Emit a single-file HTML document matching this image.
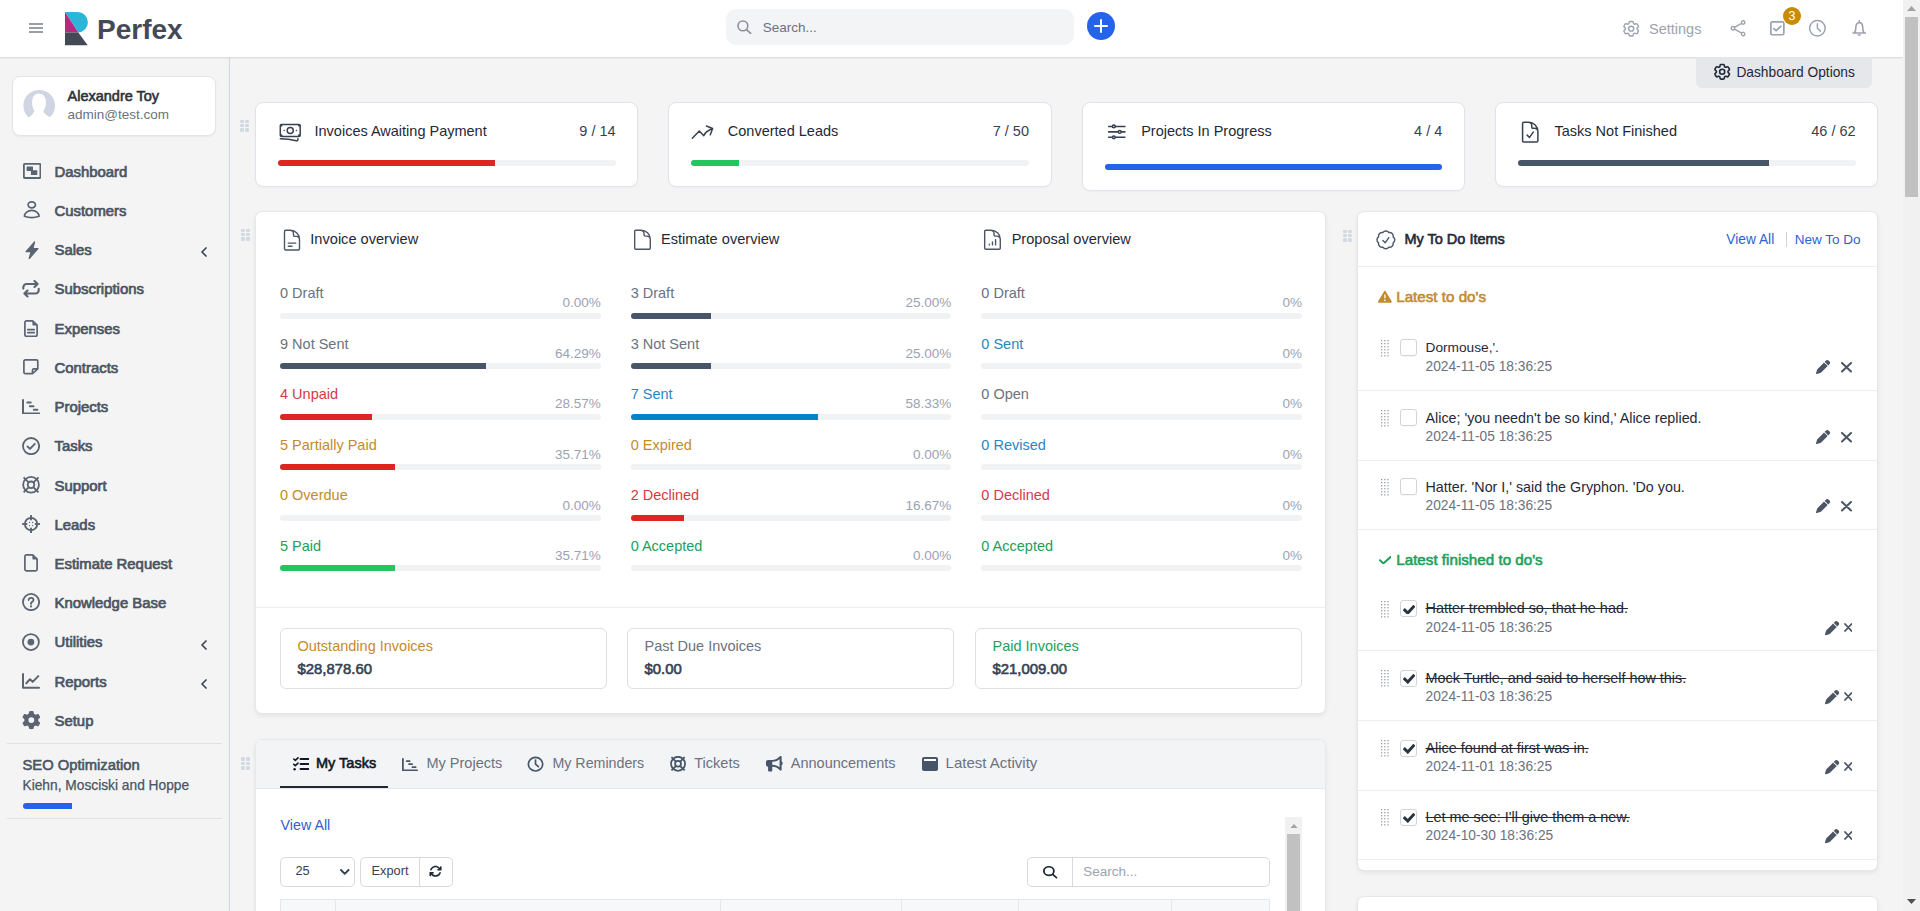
<!DOCTYPE html>
<html><head><meta charset="utf-8"><title>Perfex Dashboard</title>
<style>
*{box-sizing:border-box;margin:0;padding:0}
html,body{width:1920px;height:911px;overflow:hidden}
body{position:relative;background:#f4f4f5;font-family:"Liberation Sans",sans-serif;}
.a{position:absolute;display:block}
.t{position:absolute;white-space:nowrap}
</style></head><body>

<div class="a" style="left:0.00px;top:58.00px;width:229.00px;height:853.00px;background:#f4f4f5;"></div>
<div class="a" style="left:229.00px;top:58.00px;width:1.00px;height:853.00px;background:#d5d9df;"></div>
<div class="a" style="left:228.00px;top:58.00px;width:1.00px;height:853.00px;background:#eef1f5;"></div>
<div class="a" style="left:12.00px;top:76.00px;width:204.00px;height:60.00px;background:#fff;border:1px solid #e3e5e9;border-radius:8px;box-shadow:0 1px 2px rgba(0,0,0,.05);"></div>
<svg class="a" style="left:19.00px;top:84.00px;" width="40.00" height="40.00" viewBox="0 0 40 40" preserveAspectRatio="none"><circle cx="20.2" cy="21.7" r="15.8" fill="#cfd5e2"/><path d="M19.8 9.6C23.7 9.6 27 12.5 27 18.5C27 22.5 25.6 25.4 24.3 27.3C25.6 30.100 28.500 32.300 32 33.600L40 36.500V40H0V36.500L8 34.300C11.500 32.500 14.200 30.100 15.400 26.900C14 25 13.100 22 13.100 18.500C13.100 12.500 16 9.600 19.800 9.600Z" fill="#fff"/></svg>
<div class="t" style="left:67.50px;top:88.95px;font-size:14.5px;line-height:14.5px;color:#2b323d;-webkit-text-stroke:0.6px currentColor;">Alexandre Toy</div>
<div class="t" style="left:67.50px;top:107.75px;font-size:13.5px;line-height:13.5px;color:#6b7280;">admin@test.com</div>
<div class="t" style="left:54.50px;top:164.85px;font-size:14.9px;line-height:14.9px;color:#4b5563;-webkit-text-stroke:0.7px currentColor;">Dashboard</div>
<div class="t" style="left:54.50px;top:204.06px;font-size:14.9px;line-height:14.9px;color:#4b5563;-webkit-text-stroke:0.7px currentColor;">Customers</div>
<div class="t" style="left:54.50px;top:243.27px;font-size:14.9px;line-height:14.9px;color:#4b5563;-webkit-text-stroke:0.7px currentColor;">Sales</div>
<svg class="a" style="left:199.50px;top:247.42px;" width="8.00" height="10.00" viewBox="0 0 8 10" preserveAspectRatio="none"><path d="M6 1 2 5l4 4" fill="none" stroke="#3d4553" stroke-width="1.7" stroke-linecap="round" stroke-linejoin="round"/></svg>
<div class="t" style="left:54.50px;top:282.48px;font-size:14.9px;line-height:14.9px;color:#4b5563;-webkit-text-stroke:0.7px currentColor;">Subscriptions</div>
<div class="t" style="left:54.50px;top:321.69px;font-size:14.9px;line-height:14.9px;color:#4b5563;-webkit-text-stroke:0.7px currentColor;">Expenses</div>
<div class="t" style="left:54.50px;top:360.90px;font-size:14.9px;line-height:14.9px;color:#4b5563;-webkit-text-stroke:0.7px currentColor;">Contracts</div>
<div class="t" style="left:54.50px;top:400.11px;font-size:14.9px;line-height:14.9px;color:#4b5563;-webkit-text-stroke:0.7px currentColor;">Projects</div>
<div class="t" style="left:54.50px;top:439.32px;font-size:14.9px;line-height:14.9px;color:#4b5563;-webkit-text-stroke:0.7px currentColor;">Tasks</div>
<div class="t" style="left:54.50px;top:478.53px;font-size:14.9px;line-height:14.9px;color:#4b5563;-webkit-text-stroke:0.7px currentColor;">Support</div>
<div class="t" style="left:54.50px;top:517.74px;font-size:14.9px;line-height:14.9px;color:#4b5563;-webkit-text-stroke:0.7px currentColor;">Leads</div>
<div class="t" style="left:54.50px;top:556.95px;font-size:14.9px;line-height:14.9px;color:#4b5563;-webkit-text-stroke:0.7px currentColor;">Estimate Request</div>
<div class="t" style="left:54.50px;top:596.16px;font-size:14.9px;line-height:14.9px;color:#4b5563;-webkit-text-stroke:0.7px currentColor;">Knowledge Base</div>
<div class="t" style="left:54.50px;top:635.37px;font-size:14.9px;line-height:14.9px;color:#4b5563;-webkit-text-stroke:0.7px currentColor;">Utilities</div>
<svg class="a" style="left:199.50px;top:639.52px;" width="8.00" height="10.00" viewBox="0 0 8 10" preserveAspectRatio="none"><path d="M6 1 2 5l4 4" fill="none" stroke="#3d4553" stroke-width="1.7" stroke-linecap="round" stroke-linejoin="round"/></svg>
<div class="t" style="left:54.50px;top:674.58px;font-size:14.9px;line-height:14.9px;color:#4b5563;-webkit-text-stroke:0.7px currentColor;">Reports</div>
<svg class="a" style="left:199.50px;top:678.73px;" width="8.00" height="10.00" viewBox="0 0 8 10" preserveAspectRatio="none"><path d="M6 1 2 5l4 4" fill="none" stroke="#3d4553" stroke-width="1.7" stroke-linecap="round" stroke-linejoin="round"/></svg>
<div class="t" style="left:54.50px;top:713.79px;font-size:14.9px;line-height:14.9px;color:#4b5563;-webkit-text-stroke:0.7px currentColor;">Setup</div>
<svg class="a" style="left:23.00px;top:163.00px;" width="18.30" height="15.90" viewBox="0 0 18.3 15.9" preserveAspectRatio="none"><rect x="0.9" y="0.9" width="16.5" height="14.1" rx="0.8" fill="none" stroke="#5b6472" stroke-width="1.8"/><rect x="3.6" y="3.5" width="6.4" height="4.6" rx=".5" fill="#5b6472"/><rect x="7.9" y="7.3" width="6.4" height="4.6" rx=".5" fill="#5b6472"/></svg>
<svg class="a" style="left:19.74px;top:200.23px;overflow:visible" width="23.523" height="19.446" viewBox="0 0 24 24" preserveAspectRatio="none"><path d="M15.75 6a3.75 3.75 0 1 1-7.5 0 3.75 3.75 0 0 1 7.5 0ZM4.501 20.118a7.5 7.5 0 0 1 14.998 0A17.933 17.933 0 0 1 12 21.75c-2.676 0-5.216-.584-7.499-1.632Z" fill="none" stroke="#5b6472" stroke-width="1.7" stroke-linecap="round" stroke-linejoin="round" vector-effect="non-scaling-stroke" /></svg>
<svg class="a" style="left:24.60px;top:241.00px;" width="14.00" height="18.30" viewBox="0 0 14 18.3" preserveAspectRatio="none"><path d="M9.6 .8 1 10.6h5.1L4.2 17.5 13 7.7H7.9z" fill="#5b6472" stroke="#5b6472" stroke-width="1.2" stroke-linejoin="round"/></svg>
<svg class="a" style="left:22.20px;top:280.00px;" width="18.00" height="17.50" viewBox="0 0 18 17.5" preserveAspectRatio="none"><path d="M1.3 8.6V7.3A3.3 3.3 0 0 1 4.6 4h11M12.5 1 15.6 4l-3.100 3M16.700 8.900V10.200A3.300 3.300 0 0 1 13.400 13.500H2.400M5.500 16.500 2.400 13.500l3.100-3" fill="none" stroke="#5b6472" stroke-width="2.1" stroke-linecap="round" stroke-linejoin="round"/></svg>
<svg class="a" style="left:24.00px;top:319.50px;" width="14.00" height="17.20" viewBox="0 0 14 17.2" preserveAspectRatio="none"><path d="M8.6 .9H2.4C1.6.9.9 1.6.9 2.4v12.4c0 .8.7 1.5 1.5 1.5h9.200c.8 0 1.500-.7 1.500-1.500V5.200z" fill="none" stroke="#5b6472" stroke-width="1.7" stroke-linejoin="round"/><path d="M8.4 .9l4.7 4.7H9.6c-.7 0-1.2-.5-1.2-1.2z" fill="#5b6472"/><path d="M3.8 9.6h6.4M3.8 12.6h6.4" stroke="#5b6472" stroke-width="1.7" stroke-linecap="round"/></svg>
<svg class="a" style="left:23.20px;top:359.00px;" width="15.70" height="15.50" viewBox="0 0 15.7 15.5" preserveAspectRatio="none"><path d="M2.3.9h11.100c.8 0 1.400.6 1.400 1.400V9.800L9.500 14.600H2.300C1.500 14.600.9 14 .9 13.200V2.300C.9 1.500 1.500.9 2.300.9z M14.800 9.800h-3.900c-.8 0-1.400.6-1.400 1.400v3.400" fill="none" stroke="#5b6472" stroke-width="1.7" stroke-linejoin="round"/></svg>
<svg class="a" style="left:21.90px;top:398.60px;" width="18.10" height="15.40" viewBox="0 0 18.1 15.4" preserveAspectRatio="none"><path d="M1 1v13.4h16.1" fill="none" stroke="#5b6472" stroke-width="2" stroke-linecap="round" stroke-linejoin="round"/><path d="M5.3 3.6h3.4M7.9 7.2h3.600M11.800 10.800h3.600" stroke="#5b6472" stroke-width="2" stroke-linecap="round"/></svg>
<svg class="a" style="left:21.90px;top:437.00px;" width="18.10" height="18.20" viewBox="0 0 18.1 18.2" preserveAspectRatio="none"><circle cx="9.05" cy="9.1" r="8.1" fill="none" stroke="#5b6472" stroke-width="1.8"/><path d="M5.4 9.4l2.600 2.500 4.800-5" fill="none" stroke="#5b6472" stroke-width="1.9" stroke-linecap="round" stroke-linejoin="round"/></svg>
<svg class="a" style="left:21.90px;top:476.30px;" width="18.10" height="17.60" viewBox="0 0 18.1 17.6" preserveAspectRatio="none"><circle cx="9.05" cy="8.8" r="7.9" fill="none" stroke="#5b6472" stroke-width="1.8"/><circle cx="9.05" cy="8.8" r="3.3" fill="none" stroke="#5b6472" stroke-width="1.8"/><path d="M1.6 1.3l5 5M16.5 1.3l-5 5M1.6 16.3l5-5M16.5 16.3l-5-5" stroke="#5b6472" stroke-width="1.8"/></svg>
<svg class="a" style="left:21.90px;top:514.80px;" width="18.10" height="18.10" viewBox="0 0 18.1 18.1" preserveAspectRatio="none"><circle cx="9.05" cy="9.05" r="6.2" fill="none" stroke="#5b6472" stroke-width="1.9"/><path d="M9.05.9v3.6M9.05 13.6v3.6M.9 9.05h3.6M13.6 9.05h3.6" stroke="#5b6472" stroke-width="2" stroke-linecap="round"/><circle cx="7.5" cy="7.5" r=".7" fill="#5b6472"/><circle cx="10.6" cy="7.5" r=".7" fill="#5b6472"/><circle cx="7.5" cy="10.6" r=".7" fill="#5b6472"/><circle cx="10.6" cy="10.6" r=".7" fill="#5b6472"/></svg>
<svg class="a" style="left:24.00px;top:554.00px;" width="14.00" height="17.70" viewBox="0 0 14 17.7" preserveAspectRatio="none"><path d="M8.6 .9H2.4C1.6.9.9 1.6.9 2.4v12.9c0 .8.7 1.5 1.5 1.5h9.200c.8 0 1.500-.7 1.500-1.500V5.200z" fill="none" stroke="#5b6472" stroke-width="1.7" stroke-linejoin="round"/><path d="M8.4 .9l4.7 4.7H9.6c-.7 0-1.2-.5-1.2-1.2z" fill="#5b6472"/></svg>
<svg class="a" style="left:21.90px;top:592.60px;" width="18.10" height="18.10" viewBox="0 0 18.1 18.1" preserveAspectRatio="none"><circle cx="9.05" cy="9.05" r="8.1" fill="none" stroke="#5b6472" stroke-width="1.8"/><path d="M6.6 7c.2-1.400 1.200-2.200 2.500-2.200 1.400 0 2.400.9 2.400 2.100 0 1-.6 1.500-1.400 2-.7.4-1.100.9-1.100 1.700v.3" fill="none" stroke="#5b6472" stroke-width="1.8" stroke-linecap="round"/><circle cx="9" cy="13.4" r="1.05" fill="#5b6472"/></svg>
<svg class="a" style="left:22.25px;top:632.90px;" width="17.85" height="18.10" viewBox="0 0 17.85 18.1" preserveAspectRatio="none"><circle cx="8.9" cy="9.05" r="8" fill="none" stroke="#5b6472" stroke-width="1.8"/><circle cx="8.9" cy="9.05" r="3.4" fill="#5b6472"/></svg>
<svg class="a" style="left:22.00px;top:673.30px;" width="18.10" height="15.70" viewBox="0 0 18.1 15.7" preserveAspectRatio="none"><path d="M1 1v13.7h16.1" fill="none" stroke="#5b6472" stroke-width="2" stroke-linecap="round" stroke-linejoin="round"/><path d="M4.3 10.2 8 6.3l2.7 2.600 5.600-5.800" fill="none" stroke="#5b6472" stroke-width="2" stroke-linecap="round" stroke-linejoin="round"/></svg>
<svg class="a" style="left:21.97px;top:711.00px;overflow:visible" width="18.673" height="18.204" viewBox="0 0 512 512" preserveAspectRatio="none"><path d="M495.9 166.6c3.2 8.7 .5 18.4-6.4 24.6l-43.3 39.4c1.1 8.3 1.7 16.8 1.7 25.4s-.6 17.1-1.7 25.4l43.3 39.4c6.9 6.2 9.6 15.9 6.4 24.6c-4.4 11.9-9.7 23.3-15.8 34.3l-4.7 8.1c-6.6 11-14 21.4-22.1 31.2c-5.9 7.2-15.7 9.6-24.5 6.8l-55.7-17.7c-13.4 10.3-28.2 18.9-44 25.4l-12.5 57.1c-2 9.1-9 16.3-18.2 17.8c-13.8 2.300-28 3.5-42.5 3.5s-28.7-1.2-42.5-3.5c-9.2-1.5-16.2-8.7-18.2-17.8l-12.5-57.1c-15.8-6.5-30.6-15.1-44-25.4L83.1 425.9c-8.8 2.8-18.6 .3-24.5-6.8c-8.1-9.8-15.5-20.2-22.1-31.2l-4.7-8.1c-6.1-11-11.4-22.4-15.8-34.3c-3.2-8.7-.5-18.4 6.4-24.6l43.3-39.4C64.6 273.1 64 264.6 64 256s.6-17.1 1.7-25.4L22.4 191.2c-6.900-6.2-9.6-15.9-6.4-24.6c4.4-11.9 9.7-23.3 15.8-34.3l4.7-8.1c6.6-11 14-21.4 22.1-31.2c5.9-7.2 15.7-9.6 24.5-6.8l55.7 17.7c13.4-10.3 28.2-18.9 44-25.4l12.5-57.1c2-9.1 9-16.3 18.2-17.8C227.3 1.2 241.5 0 256 0s28.7 1.2 42.5 3.5c9.2 1.5 16.2 8.7 18.2 17.8l12.5 57.1c15.8 6.5 30.6 15.1 44 25.4l55.7-17.7c8.8-2.8 18.6-.3 24.5 6.8c8.1 9.8 15.5 20.2 22.1 31.2l4.7 8.1c6.1 11 11.4 22.4 15.8 34.300zM256 336a80 80 0 1 0 0-160 80 80 0 1 0 0 160z" fill="#5b6472" /></svg>
<div class="a" style="left:7.00px;top:743.00px;width:215.00px;height:1.00px;background:#dfe1e6;"></div>
<div class="t" style="left:22.50px;top:757.52px;font-size:14.75px;line-height:14.75px;color:#4b5563;-webkit-text-stroke:0.6px currentColor;">SEO Optimization</div>
<div class="t" style="left:22.50px;top:778.83px;font-size:13.75px;line-height:13.75px;color:#4b5563;-webkit-text-stroke:0.25px currentColor;">Kiehn, Mosciski and Hoppe</div>
<div class="a" style="left:23.00px;top:803.00px;width:49.00px;height:6.00px;background:#2563eb;border-radius:3px 0 0 3px;"></div>
<div class="a" style="left:7.00px;top:818.00px;width:215.00px;height:1.00px;background:#dfe1e6;"></div>
<div class="a" style="left:0.00px;top:0.00px;width:1903.00px;height:57.00px;background:#fff;"></div>
<div class="a" style="left:0.00px;top:57.00px;width:1903.00px;height:1.00px;background:#dcdde0;"></div>
<div class="a" style="left:0.00px;top:58.00px;width:1903.00px;height:2.00px;background:linear-gradient(rgba(0,0,0,.04),rgba(0,0,0,0));"></div>
<div class="a" style="left:29.00px;top:23.30px;width:14.00px;height:1.50px;background:#9a9ea6;"></div>
<div class="a" style="left:29.00px;top:27.30px;width:14.00px;height:1.50px;background:#9a9ea6;"></div>
<div class="a" style="left:29.00px;top:31.30px;width:14.00px;height:1.50px;background:#9a9ea6;"></div>
<svg class="a" style="left:64.00px;top:11.00px;" width="25.00" height="36.00" viewBox="64 11 25 36" preserveAspectRatio="none"><path d="M65 11.9H77.6A10.3 10.3 0 0 1 77.6 32.5H78.3Z" fill="#2ab5d9"/><path d="M65 11.9 78.3 32.5H65Z" fill="#b52a80"/><path d="M65 32.5H78.3L87.7 45.3H65Z" fill="#434a56"/></svg>
<div class="t" style="left:97.00px;top:16.10px;font-size:28px;line-height:28px;color:#434a56;font-weight:700;">Perfex</div>
<div class="a" style="left:726.00px;top:9.00px;width:348.00px;height:36.00px;background:#f3f4f6;border-radius:10px;"></div>
<svg class="a" style="left:737.00px;top:19.80px;" width="14.50" height="14.00" viewBox="0 0 14.5 14" preserveAspectRatio="none"><circle cx="5.9" cy="5.9" r="4.9" fill="none" stroke="#8b919a" stroke-width="1.6"/><path d="M9.6 9.6 13.6 13.4" stroke="#8b919a" stroke-width="1.7" stroke-linecap="round"/></svg>
<div class="t" style="left:762.80px;top:20.75px;font-size:13.5px;line-height:13.5px;color:#6b7280;">Search...</div>
<div class="a" style="left:1087.00px;top:12.00px;width:28.00px;height:28.00px;background:#2563eb;border-radius:50%;"></div>
<div class="a" style="left:1094.00px;top:25.00px;width:14.00px;height:2.00px;background:#fff;border-radius:1px;"></div>
<div class="a" style="left:1100.00px;top:19.00px;width:2.00px;height:14.00px;background:#fff;border-radius:1px;"></div>
<svg class="a" style="left:1620.71px;top:19.27px;overflow:visible" width="20.388" height="19.467" viewBox="0 0 24 24" preserveAspectRatio="none"><path d="M9.594 3.94c.09-.542.56-.94 1.11-.94h2.593c.55 0 1.02.398 1.11.94l.213 1.281c.063.374.313.686.645.87.074.04.147.083.22.127.325.196.72.257 1.075.124l1.217-.456a1.125 1.125 0 0 1 1.37.49l1.296 2.247a1.125 1.125 0 0 1-.26 1.431l-1.003.827c-.293.241-.438.613-.43.992a7.723 7.723 0 0 1 0 .255c-.008.378.137.75.43.991l1.004.827c.424.35.534.955.26 1.43l-1.298 2.247a1.125 1.125 0 0 1-1.369.491l-1.217-.456c-.355-.133-.75-.072-1.076.124a6.47 6.47 0 0 1-.22.128c-.331.183-.581.495-.644.869l-.213 1.281c-.09.543-.56.94-1.11.94h-2.594c-.55 0-1.019-.398-1.11-.94l-.213-1.281c-.062-.374-.312-.686-.644-.87a6.52 6.52 0 0 1-.22-.127c-.325-.196-.72-.257-1.076-.124l-1.217.456a1.125 1.125 0 0 1-1.369-.49l-1.297-2.247a1.125 1.125 0 0 1 .26-1.431l1.004-.827c.292-.24.437-.613.43-.991a6.932 6.932 0 0 1 0-.255c.007-.38-.138-.751-.43-.992l-1.004-.827a1.125 1.125 0 0 1-.26-1.43l1.297-2.247a1.125 1.125 0 0 1 1.37-.491l1.216.456c.356.133.751.072 1.076-.124.072-.044.146-.086.22-.128.332-.183.582-.495.644-.869l.214-1.28ZM15 12a3 3 0 1 1-6 0 3 3 0 0 1 6 0Z" fill="none" stroke="#9ca3af" stroke-width="1.4" stroke-linecap="round" stroke-linejoin="round" vector-effect="non-scaling-stroke" /></svg>
<div class="t" style="left:1649.00px;top:21.65px;font-size:14.5px;line-height:14.5px;color:#9ca3af;">Settings</div>
<svg class="a" style="left:1729.44px;top:19.14px;overflow:visible" width="18.113" height="18.497" viewBox="0 0 24 24" preserveAspectRatio="none"><path d="M7.217 10.907a2.25 2.25 0 1 0 0 2.186m0-2.186c.18.324.283.696.283 1.093s-.103.77-.283 1.093m0-2.186 9.566-5.314m-9.566 7.5 9.566 5.314m0 0a2.25 2.25 0 1 0 3.935 2.186 2.25 2.25 0 0 0-3.935-2.186Zm0-12.814a2.25 2.25 0 1 0 3.933-2.185 2.25 2.25 0 0 0-3.933 2.185Z" fill="none" stroke="#9ca3af" stroke-width="1.4" stroke-linecap="round" stroke-linejoin="round" vector-effect="non-scaling-stroke" /></svg>
<svg class="a" style="left:1770.30px;top:21.10px;" width="14.70" height="14.60" viewBox="0 0 14.7 14.6" preserveAspectRatio="none"><rect x="0.85" y="0.85" width="13" height="12.9" rx="1.5" fill="none" stroke="#9ca3af" stroke-width="1.7"/><path d="M3.8 7.6l2.3 2.1 4.600-4.400" fill="none" stroke="#9ca3af" stroke-width="1.8" stroke-linecap="round" stroke-linejoin="round"/></svg>
<div class="a" style="left:1783.00px;top:7.00px;width:18.00px;height:18.00px;background:#ca8a04;border-radius:50%;"></div>
<div class="t" style="left:1783px;top:7px;width:18px;height:18px;line-height:18px;text-align:center;font-size:12.5px;color:#fff">3</div>
<svg class="a" style="left:1806.75px;top:18.18px;overflow:visible" width="20.800" height="20.533" viewBox="0 0 24 24" preserveAspectRatio="none"><path d="M12 6.8v5.2l3.6 3.3M21 12a9 9 0 1 1-18 0 9 9 0 0 1 18 0Z" fill="none" stroke="#9ca3af" stroke-width="1.5" stroke-linecap="round" stroke-linejoin="round" vector-effect="non-scaling-stroke" /></svg>
<svg class="a" style="left:1851.60px;top:20.00px;" width="14.50" height="17.00" viewBox="0 0 14.5 17" preserveAspectRatio="none"><path d="M7.25 .8v1.6M2.6 12.6c.9-1.300 1.200-2.800 1.200-5.200 0-2.900 1.500-4.800 3.450-4.800s3.450 1.900 3.450 4.800c0 2.400.3 3.900 1.200 5.200M.9 13h12.700" fill="none" stroke="#9ca3af" stroke-width="1.6" stroke-linecap="round" stroke-linejoin="round"/><path d="M5.500 14.300h3.500a1.750 1.750 0 0 1-3.500 0z" fill="#9ca3af"/></svg>
<div class="a" style="left:1903.00px;top:0.00px;width:17.00px;height:911.00px;background:#f1f1f1;"></div>
<svg class="a" style="left:1907.00px;top:6.00px;" width="9.00" height="5.00" viewBox="0 0 9 5" preserveAspectRatio="none"><path d="M0 5 4.5 0 9 5z" fill="#a3a3a3"/></svg>
<div class="a" style="left:1905.00px;top:17.00px;width:13.00px;height:180.00px;background:#c1c1c1;"></div>
<svg class="a" style="left:1907.00px;top:899.30px;" width="9.00" height="5.00" viewBox="0 0 9 5" preserveAspectRatio="none"><path d="M0 0 4.5 5 9 0z" fill="#505050"/></svg>
<div class="a" style="left:1696.00px;top:57.00px;width:176.00px;height:31.00px;background:#e5e7eb;border-radius:0 0 6px 6px;"></div>
<svg class="a" style="left:1711.71px;top:62.11px;overflow:visible" width="20.388" height="19.533" viewBox="0 0 24 24" preserveAspectRatio="none"><path d="M9.594 3.94c.09-.542.56-.94 1.11-.94h2.593c.55 0 1.02.398 1.11.94l.213 1.281c.063.374.313.686.645.87.074.04.147.083.22.127.325.196.72.257 1.075.124l1.217-.456a1.125 1.125 0 0 1 1.37.49l1.296 2.247a1.125 1.125 0 0 1-.26 1.431l-1.003.827c-.293.241-.438.613-.43.992a7.723 7.723 0 0 1 0 .255c-.008.378.137.75.43.991l1.004.827c.424.35.534.955.26 1.43l-1.298 2.247a1.125 1.125 0 0 1-1.369.491l-1.217-.456c-.355-.133-.75-.072-1.076.124a6.47 6.47 0 0 1-.22.128c-.331.183-.581.495-.644.869l-.213 1.281c-.09.543-.56.94-1.11.94h-2.594c-.55 0-1.019-.398-1.11-.94l-.213-1.281c-.062-.374-.312-.686-.644-.87a6.52 6.52 0 0 1-.22-.127c-.325-.196-.72-.257-1.076-.124l-1.217.456a1.125 1.125 0 0 1-1.369-.49l-1.297-2.247a1.125 1.125 0 0 1 .26-1.431l1.004-.827c.292-.24.437-.613.43-.991a6.932 6.932 0 0 1 0-.255c.007-.38-.138-.751-.43-.992l-1.004-.827a1.125 1.125 0 0 1-.26-1.43l1.297-2.247a1.125 1.125 0 0 1 1.37-.491l1.216.456c.356.133.751.072 1.076-.124.072-.044.146-.086.22-.128.332-.183.582-.495.644-.869l.214-1.28ZM15 12a3 3 0 1 1-6 0 3 3 0 0 1 6 0Z" fill="none" stroke="#1f2937" stroke-width="1.6" stroke-linecap="round" stroke-linejoin="round" vector-effect="non-scaling-stroke" /></svg>
<div class="t" style="left:1736.40px;top:65.53px;font-size:13.75px;line-height:13.75px;color:#1f2937;">Dashboard Options</div>
<div class="a" style="left:240.00px;top:119.50px;width:4.00px;height:3.60px;background:#d3d9e3;border-radius:1.3px;"></div>
<div class="a" style="left:245.10px;top:119.50px;width:4.00px;height:3.60px;background:#d3d9e3;border-radius:1.3px;"></div>
<div class="a" style="left:240.00px;top:123.80px;width:4.00px;height:3.60px;background:#d3d9e3;border-radius:1.3px;"></div>
<div class="a" style="left:245.10px;top:123.80px;width:4.00px;height:3.60px;background:#d3d9e3;border-radius:1.3px;"></div>
<div class="a" style="left:240.00px;top:128.10px;width:4.00px;height:3.60px;background:#d3d9e3;border-radius:1.3px;"></div>
<div class="a" style="left:245.10px;top:128.10px;width:4.00px;height:3.60px;background:#d3d9e3;border-radius:1.3px;"></div>
<div class="a" style="left:255.00px;top:102.00px;width:383.33px;height:85.00px;background:#fff;border:1px solid #e1e2ea;border-radius:8px;box-shadow:0 1px 2px rgba(0,0,0,.03);"></div>
<div class="t" style="left:314.50px;top:123.85px;font-size:14.5px;line-height:14.5px;color:#1f2937;">Invoices Awaiting Payment</div>
<div class="t" style="right:1304.37px;top:123.85px;font-size:14.5px;line-height:14.5px;color:#374151;">9 / 14</div>
<div class="a" style="left:278.00px;top:160.00px;width:337.83px;height:6.00px;background:#f1f2f4;border-radius:3px;"></div>
<div class="a" style="left:278.00px;top:160.00px;width:217.18px;height:6.00px;background:#dc2626;border-radius:3px 0 0 3px;"></div>
<div class="a" style="left:668.33px;top:102.00px;width:383.33px;height:85.00px;background:#fff;border:1px solid #e1e2ea;border-radius:8px;box-shadow:0 1px 2px rgba(0,0,0,.03);"></div>
<div class="t" style="left:727.83px;top:123.85px;font-size:14.5px;line-height:14.5px;color:#1f2937;">Converted Leads</div>
<div class="t" style="right:891.04px;top:123.85px;font-size:14.5px;line-height:14.5px;color:#374151;">7 / 50</div>
<div class="a" style="left:691.33px;top:160.00px;width:337.83px;height:6.00px;background:#f1f2f4;border-radius:3px;"></div>
<div class="a" style="left:691.33px;top:160.00px;width:47.30px;height:6.00px;background:#22c55e;border-radius:3px 0 0 3px;"></div>
<div class="a" style="left:1081.67px;top:102.00px;width:383.33px;height:89.00px;background:#fff;border:1px solid #e1e2ea;border-radius:8px;box-shadow:0 1px 2px rgba(0,0,0,.03);"></div>
<div class="t" style="left:1141.17px;top:123.85px;font-size:14.5px;line-height:14.5px;color:#1f2937;">Projects In Progress</div>
<div class="t" style="right:477.70px;top:123.85px;font-size:14.5px;line-height:14.5px;color:#374151;">4 / 4</div>
<div class="a" style="left:1104.67px;top:164.00px;width:337.83px;height:6.00px;background:#f1f2f4;border-radius:3px;"></div>
<div class="a" style="left:1104.67px;top:164.00px;width:337.83px;height:6.00px;background:#2563eb;border-radius:3px;"></div>
<div class="a" style="left:1495.00px;top:102.00px;width:383.33px;height:85.00px;background:#fff;border:1px solid #e1e2ea;border-radius:8px;box-shadow:0 1px 2px rgba(0,0,0,.03);"></div>
<div class="t" style="left:1554.50px;top:123.85px;font-size:14.5px;line-height:14.5px;color:#1f2937;">Tasks Not Finished</div>
<div class="t" style="right:64.37px;top:123.85px;font-size:14.5px;line-height:14.5px;color:#374151;">46 / 62</div>
<div class="a" style="left:1518.00px;top:160.00px;width:337.83px;height:6.00px;background:#f1f2f4;border-radius:3px;"></div>
<div class="a" style="left:1518.00px;top:160.00px;width:250.65px;height:6.00px;background:#475569;border-radius:3px 0 0 3px;"></div>
<svg class="a" style="left:277.75px;top:119.78px;overflow:visible" width="24.492" height="23.865" viewBox="0 0 24 24" preserveAspectRatio="none"><path d="M2.25 18.75a60.07 60.07 0 0 1 15.797 2.101c.727.198 1.453-.342 1.453-1.096V18.75M3.75 4.5v.75A.75.75 0 0 1 3 6h-.75m0 0v-.375c0-.621.504-1.125 1.125-1.125H20.25M2.25 6v9m18-10.5v.75c0 .414.336.75.75.75h.75m-1.5-1.5h.375c.621 0 1.125.504 1.125 1.125v9.75c0 .621-.504 1.125-1.125 1.125h-.375m1.5-1.5H21a.75.75 0 0 0-.75.75v.75m0 0H3.75m0 0h-.375a1.125 1.125 0 0 1-1.125-1.125V15m1.5 1.5v-.75A.75.75 0 0 0 3 15h-.75M15 10.5a3 3 0 1 1-6 0 3 3 0 0 1 6 0Zm3 0h.008v.008H18V10.5Zm-12 0h.008v.008H6V10.5Z" fill="none" stroke="#374151" stroke-width="1.5" stroke-linecap="round" stroke-linejoin="round" vector-effect="non-scaling-stroke" /></svg>
<svg class="a" style="left:690.42px;top:119.24px;overflow:visible" width="24.844" height="25.752" viewBox="0 0 24 24" preserveAspectRatio="none"><path d="M2.25 18 9 11.25l4.306 4.306a11.95 11.95 0 0 1 5.814-5.518l2.74-1.22m0 0-5.94-2.281m5.94 2.28-2.28 5.941" fill="none" stroke="#374151" stroke-width="1.5" stroke-linecap="round" stroke-linejoin="round" vector-effect="non-scaling-stroke" /></svg>
<svg class="a" style="left:1105.12px;top:121.12px;overflow:visible" width="23.564" height="21.760" viewBox="0 0 24 24" preserveAspectRatio="none"><path d="M10.5 6h9.75M10.5 6a1.5 1.5 0 1 1-3 0m3 0a1.5 1.5 0 1 0-3 0M3.75 6H7.5m3 12h9.75m-9.75 0a1.5 1.5 0 0 1-3 0m3 0a1.5 1.5 0 0 0-3 0m-3.75 0H7.5m9-6h3.75m-3.75 0a1.5 1.5 0 0 1-3 0m3 0a1.5 1.5 0 0 0-3 0m-9.75 0h9.75" fill="none" stroke="#374151" stroke-width="1.6" stroke-linecap="round" stroke-linejoin="round" vector-effect="non-scaling-stroke" /></svg>
<svg class="a" style="left:1517.56px;top:119.88px;overflow:visible" width="24.480" height="24.246" viewBox="0 0 24 24" preserveAspectRatio="none"><path d="M10.125 2.25h-4.5c-.621 0-1.125.504-1.125 1.125v17.25c0 .621.504 1.125 1.125 1.125h12.75c.621 0 1.125-.504 1.125-1.125v-9M10.125 2.25h.375a9 9 0 0 1 9 9v.375M10.125 2.25A3.375 3.375 0 0 1 13.5 5.625v1.5c0 .621.504 1.125 1.125 1.125h1.5a3.375 3.375 0 0 1 3.375 3.375M9 15l2.25 2.25L15 12" fill="none" stroke="#374151" stroke-width="1.5" stroke-linecap="round" stroke-linejoin="round" vector-effect="non-scaling-stroke" /></svg>
<div class="a" style="left:255.00px;top:211.00px;width:1071.33px;height:503.00px;background:#fff;border:1px solid #e6e7ea;border-radius:7px;box-shadow:0 2px 4px rgba(0,0,0,.07);"></div>
<div class="a" style="left:240.50px;top:228.60px;width:4.00px;height:3.60px;background:#d3d9e3;border-radius:1.3px;"></div>
<div class="a" style="left:245.60px;top:228.60px;width:4.00px;height:3.60px;background:#d3d9e3;border-radius:1.3px;"></div>
<div class="a" style="left:240.50px;top:232.90px;width:4.00px;height:3.60px;background:#d3d9e3;border-radius:1.3px;"></div>
<div class="a" style="left:245.60px;top:232.90px;width:4.00px;height:3.60px;background:#d3d9e3;border-radius:1.3px;"></div>
<div class="a" style="left:240.50px;top:237.20px;width:4.00px;height:3.60px;background:#d3d9e3;border-radius:1.3px;"></div>
<div class="a" style="left:245.60px;top:237.20px;width:4.00px;height:3.60px;background:#d3d9e3;border-radius:1.3px;"></div>
<svg class="a" style="left:279.80px;top:227.83px;overflow:visible" width="24.000" height="24.246" viewBox="0 0 24 24" preserveAspectRatio="none"><path d="M19.5 14.25v-2.625a3.375 3.375 0 0 0-3.375-3.375h-1.5A1.125 1.125 0 0 1 13.5 7.125v-1.5a3.375 3.375 0 0 0-3.375-3.375H8.25m0 12.75h7.5m-7.5 3H12M10.5 2.25H5.625c-.621 0-1.125.504-1.125 1.125v17.25c0 .621.504 1.125 1.125 1.125h12.75c.621 0 1.125-.504 1.125-1.125V11.25a9 9 0 0 0-9-9Z" fill="none" stroke="#4b5563" stroke-width="1.4" stroke-linecap="round" stroke-linejoin="round" vector-effect="non-scaling-stroke" /></svg>
<svg class="a" style="left:630.32px;top:227.80px;overflow:visible" width="24.960" height="23.508" viewBox="0 0 24 24" preserveAspectRatio="none"><path d="M19.5 14.25v-2.625a3.375 3.375 0 0 0-3.375-3.375h-1.5A1.125 1.125 0 0 1 13.5 7.125v-1.5a3.375 3.375 0 0 0-3.375-3.375H8.25m2.25 0H5.625c-.621 0-1.125.504-1.125 1.125v17.25c0 .621.504 1.125 1.125 1.125h12.75c.621 0 1.125-.504 1.125-1.125V11.25a9 9 0 0 0-9-9Z" fill="none" stroke="#4b5563" stroke-width="1.4" stroke-linecap="round" stroke-linejoin="round" vector-effect="non-scaling-stroke" /></svg>
<svg class="a" style="left:980.32px;top:227.80px;overflow:visible" width="24.960" height="23.508" viewBox="0 0 24 24" preserveAspectRatio="none"><path d="M19.5 14.25v-2.625a3.375 3.375 0 0 0-3.375-3.375h-1.5A1.125 1.125 0 0 1 13.5 7.125v-1.5a3.375 3.375 0 0 0-3.375-3.375H8.25M9 16.5v.75m3-3v3M15 12v5.25m-4.5-15H5.625c-.621 0-1.125.504-1.125 1.125v17.25c0 .621.504 1.125 1.125 1.125h12.75c.621 0 1.125-.504 1.125-1.125V11.25a9 9 0 0 0-9-9Z" fill="none" stroke="#4b5563" stroke-width="1.4" stroke-linecap="round" stroke-linejoin="round" vector-effect="non-scaling-stroke" /></svg>
<div class="t" style="left:310.30px;top:231.80px;font-size:14.6px;line-height:14.6px;color:#1f2937;">Invoice overview</div>
<div class="t" style="left:660.97px;top:231.80px;font-size:14.6px;line-height:14.6px;color:#1f2937;">Estimate overview</div>
<div class="t" style="left:1011.63px;top:231.80px;font-size:14.6px;line-height:14.6px;color:#1f2937;">Proposal overview</div>
<div class="t" style="left:280.00px;top:285.95px;font-size:14.5px;line-height:14.5px;color:#6b7280;">0 Draft</div>
<div class="t" style="right:1319.33px;top:295.95px;font-size:13.5px;line-height:13.5px;color:#9aa3b2;">0.00%</div>
<div class="a" style="left:280.00px;top:313.00px;width:320.67px;height:6.00px;background:#f1f2f4;border-radius:3px;"></div>
<div class="t" style="left:280.00px;top:336.95px;font-size:14.5px;line-height:14.5px;color:#6b7280;">9 Not Sent</div>
<div class="t" style="right:1319.33px;top:346.95px;font-size:13.5px;line-height:13.5px;color:#9aa3b2;">64.29%</div>
<div class="a" style="left:280.00px;top:363.00px;width:320.67px;height:6.00px;background:#f1f2f4;border-radius:3px;"></div>
<div class="a" style="left:280.00px;top:363.00px;width:206.16px;height:6.00px;background:#475569;border-radius:3px 0 0 3px;"></div>
<div class="t" style="left:280.00px;top:386.95px;font-size:14.5px;line-height:14.5px;color:#d63a45;">4 Unpaid</div>
<div class="t" style="right:1319.33px;top:396.95px;font-size:13.5px;line-height:13.5px;color:#9aa3b2;">28.57%</div>
<div class="a" style="left:280.00px;top:414.00px;width:320.67px;height:6.00px;background:#f1f2f4;border-radius:3px;"></div>
<div class="a" style="left:280.00px;top:414.00px;width:91.62px;height:6.00px;background:#dc2626;border-radius:3px 0 0 3px;"></div>
<div class="t" style="left:280.00px;top:437.95px;font-size:14.5px;line-height:14.5px;color:#c48b2c;">5 Partially Paid</div>
<div class="t" style="right:1319.33px;top:447.95px;font-size:13.5px;line-height:13.5px;color:#9aa3b2;">35.71%</div>
<div class="a" style="left:280.00px;top:464.00px;width:320.67px;height:6.00px;background:#f1f2f4;border-radius:3px;"></div>
<div class="a" style="left:280.00px;top:464.00px;width:114.51px;height:6.00px;background:#dc2626;border-radius:3px 0 0 3px;"></div>
<div class="t" style="left:280.00px;top:487.95px;font-size:14.5px;line-height:14.5px;color:#c48b2c;">0 Overdue</div>
<div class="t" style="right:1319.33px;top:498.95px;font-size:13.5px;line-height:13.5px;color:#9aa3b2;">0.00%</div>
<div class="a" style="left:280.00px;top:515.00px;width:320.67px;height:6.00px;background:#f1f2f4;border-radius:3px;"></div>
<div class="t" style="left:280.00px;top:538.95px;font-size:14.5px;line-height:14.5px;color:#22a05a;">5 Paid</div>
<div class="t" style="right:1319.33px;top:548.95px;font-size:13.5px;line-height:13.5px;color:#9aa3b2;">35.71%</div>
<div class="a" style="left:280.00px;top:565.00px;width:320.67px;height:6.00px;background:#f1f2f4;border-radius:3px;"></div>
<div class="a" style="left:280.00px;top:565.00px;width:114.51px;height:6.00px;background:#22c55e;border-radius:3px 0 0 3px;"></div>
<div class="t" style="left:630.67px;top:285.95px;font-size:14.5px;line-height:14.5px;color:#6b7280;">3 Draft</div>
<div class="t" style="right:968.66px;top:295.95px;font-size:13.5px;line-height:13.5px;color:#9aa3b2;">25.00%</div>
<div class="a" style="left:630.67px;top:313.00px;width:320.67px;height:6.00px;background:#f1f2f4;border-radius:3px;"></div>
<div class="a" style="left:630.67px;top:313.00px;width:80.17px;height:6.00px;background:#475569;border-radius:3px 0 0 3px;"></div>
<div class="t" style="left:630.67px;top:336.95px;font-size:14.5px;line-height:14.5px;color:#6b7280;">3 Not Sent</div>
<div class="t" style="right:968.66px;top:346.95px;font-size:13.5px;line-height:13.5px;color:#9aa3b2;">25.00%</div>
<div class="a" style="left:630.67px;top:363.00px;width:320.67px;height:6.00px;background:#f1f2f4;border-radius:3px;"></div>
<div class="a" style="left:630.67px;top:363.00px;width:80.17px;height:6.00px;background:#475569;border-radius:3px 0 0 3px;"></div>
<div class="t" style="left:630.67px;top:386.95px;font-size:14.5px;line-height:14.5px;color:#2a86c2;">7 Sent</div>
<div class="t" style="right:968.66px;top:396.95px;font-size:13.5px;line-height:13.5px;color:#9aa3b2;">58.33%</div>
<div class="a" style="left:630.67px;top:414.00px;width:320.67px;height:6.00px;background:#f1f2f4;border-radius:3px;"></div>
<div class="a" style="left:630.67px;top:414.00px;width:187.05px;height:6.00px;background:#0284c7;border-radius:3px 0 0 3px;"></div>
<div class="t" style="left:630.67px;top:437.95px;font-size:14.5px;line-height:14.5px;color:#c48b2c;">0 Expired</div>
<div class="t" style="right:968.66px;top:447.95px;font-size:13.5px;line-height:13.5px;color:#9aa3b2;">0.00%</div>
<div class="a" style="left:630.67px;top:464.00px;width:320.67px;height:6.00px;background:#f1f2f4;border-radius:3px;"></div>
<div class="t" style="left:630.67px;top:487.95px;font-size:14.5px;line-height:14.5px;color:#d63a45;">2 Declined</div>
<div class="t" style="right:968.66px;top:498.95px;font-size:13.5px;line-height:13.5px;color:#9aa3b2;">16.67%</div>
<div class="a" style="left:630.67px;top:515.00px;width:320.67px;height:6.00px;background:#f1f2f4;border-radius:3px;"></div>
<div class="a" style="left:630.67px;top:515.00px;width:53.46px;height:6.00px;background:#dc2626;border-radius:3px 0 0 3px;"></div>
<div class="t" style="left:630.67px;top:538.95px;font-size:14.5px;line-height:14.5px;color:#22a05a;">0 Accepted</div>
<div class="t" style="right:968.66px;top:548.95px;font-size:13.5px;line-height:13.5px;color:#9aa3b2;">0.00%</div>
<div class="a" style="left:630.67px;top:565.00px;width:320.67px;height:6.00px;background:#f1f2f4;border-radius:3px;"></div>
<div class="t" style="left:981.33px;top:285.95px;font-size:14.5px;line-height:14.5px;color:#6b7280;">0 Draft</div>
<div class="t" style="right:618.00px;top:295.95px;font-size:13.5px;line-height:13.5px;color:#9aa3b2;">0%</div>
<div class="a" style="left:981.33px;top:313.00px;width:320.67px;height:6.00px;background:#f1f2f4;border-radius:3px;"></div>
<div class="t" style="left:981.33px;top:336.95px;font-size:14.5px;line-height:14.5px;color:#2a86c2;">0 Sent</div>
<div class="t" style="right:618.00px;top:346.95px;font-size:13.5px;line-height:13.5px;color:#9aa3b2;">0%</div>
<div class="a" style="left:981.33px;top:363.00px;width:320.67px;height:6.00px;background:#f1f2f4;border-radius:3px;"></div>
<div class="t" style="left:981.33px;top:386.95px;font-size:14.5px;line-height:14.5px;color:#6b7280;">0 Open</div>
<div class="t" style="right:618.00px;top:396.95px;font-size:13.5px;line-height:13.5px;color:#9aa3b2;">0%</div>
<div class="a" style="left:981.33px;top:414.00px;width:320.67px;height:6.00px;background:#f1f2f4;border-radius:3px;"></div>
<div class="t" style="left:981.33px;top:437.95px;font-size:14.5px;line-height:14.5px;color:#2a86c2;">0 Revised</div>
<div class="t" style="right:618.00px;top:447.95px;font-size:13.5px;line-height:13.5px;color:#9aa3b2;">0%</div>
<div class="a" style="left:981.33px;top:464.00px;width:320.67px;height:6.00px;background:#f1f2f4;border-radius:3px;"></div>
<div class="t" style="left:981.33px;top:487.95px;font-size:14.5px;line-height:14.5px;color:#d63a45;">0 Declined</div>
<div class="t" style="right:618.00px;top:498.95px;font-size:13.5px;line-height:13.5px;color:#9aa3b2;">0%</div>
<div class="a" style="left:981.33px;top:515.00px;width:320.67px;height:6.00px;background:#f1f2f4;border-radius:3px;"></div>
<div class="t" style="left:981.33px;top:538.95px;font-size:14.5px;line-height:14.5px;color:#22a05a;">0 Accepted</div>
<div class="t" style="right:618.00px;top:548.95px;font-size:13.5px;line-height:13.5px;color:#9aa3b2;">0%</div>
<div class="a" style="left:981.33px;top:565.00px;width:320.67px;height:6.00px;background:#f1f2f4;border-radius:3px;"></div>
<div class="a" style="left:256.00px;top:607.00px;width:1069.33px;height:1.00px;background:#eceef1;"></div>
<div class="a" style="left:280.00px;top:628.00px;width:327.00px;height:61.00px;background:#fff;border:1px solid #dcdfe4;border-radius:6px;"></div>
<div class="t" style="left:297.50px;top:638.65px;font-size:14.5px;line-height:14.5px;color:#c48b2c;">Outstanding Invoices</div>
<div class="t" style="left:297.50px;top:662.45px;font-size:14.9px;line-height:14.9px;color:#374151;-webkit-text-stroke:0.6px currentColor;">$28,878.60</div>
<div class="a" style="left:627.00px;top:628.00px;width:327.00px;height:61.00px;background:#fff;border:1px solid #dcdfe4;border-radius:6px;"></div>
<div class="t" style="left:644.50px;top:638.65px;font-size:14.5px;line-height:14.5px;color:#6b7280;">Past Due Invoices</div>
<div class="t" style="left:644.50px;top:662.45px;font-size:14.9px;line-height:14.9px;color:#374151;-webkit-text-stroke:0.6px currentColor;">$0.00</div>
<div class="a" style="left:975.00px;top:628.00px;width:327.00px;height:61.00px;background:#fff;border:1px solid #dcdfe4;border-radius:6px;"></div>
<div class="t" style="left:992.50px;top:638.65px;font-size:14.5px;line-height:14.5px;color:#22a05a;">Paid Invoices</div>
<div class="t" style="left:992.50px;top:662.45px;font-size:14.9px;line-height:14.9px;color:#374151;-webkit-text-stroke:0.6px currentColor;">$21,009.00</div>
<div class="a" style="left:255.00px;top:739.00px;width:1071.33px;height:200.00px;background:#fff;border:1px solid #e6e7ea;border-radius:7px;box-shadow:0 2px 4px rgba(0,0,0,.07);"></div>
<div class="a" style="left:256.00px;top:740.00px;width:1069.33px;height:48.00px;background:#f3f4f6;border-radius:6px 6px 0 0;"></div>
<div class="a" style="left:256.00px;top:788.00px;width:1069.33px;height:1.00px;background:#e5e7eb;"></div>
<div class="a" style="left:241.00px;top:757.40px;width:4.00px;height:3.60px;background:#d3d9e3;border-radius:1.3px;"></div>
<div class="a" style="left:246.10px;top:757.40px;width:4.00px;height:3.60px;background:#d3d9e3;border-radius:1.3px;"></div>
<div class="a" style="left:241.00px;top:761.70px;width:4.00px;height:3.60px;background:#d3d9e3;border-radius:1.3px;"></div>
<div class="a" style="left:246.10px;top:761.70px;width:4.00px;height:3.60px;background:#d3d9e3;border-radius:1.3px;"></div>
<div class="a" style="left:241.00px;top:766.00px;width:4.00px;height:3.60px;background:#d3d9e3;border-radius:1.3px;"></div>
<div class="a" style="left:246.10px;top:766.00px;width:4.00px;height:3.60px;background:#d3d9e3;border-radius:1.3px;"></div>
<div class="a" style="left:280.00px;top:786.00px;width:108.00px;height:2.00px;background:#1f2937;"></div>
<svg class="a" style="left:292.60px;top:757.00px;" width="16.50" height="13.50" viewBox="0 0 16.5 13.5" preserveAspectRatio="none"><path d="M0.8 2 2.3 3.4 5 0.8M0.8 7.3 2.3 8.7 5 6.1" fill="none" stroke="#111827" stroke-width="1.6" stroke-linecap="round" stroke-linejoin="round"/><circle cx="1.6" cy="12.2" r="1.2" fill="#111827"/><path d="M7.5 2h8.2M7.5 7h8.2M7.5 12h8.2" stroke="#111827" stroke-width="1.9" stroke-linecap="round"/></svg>
<div class="t" style="left:316.00px;top:755.95px;font-size:14.5px;line-height:14.5px;color:#111827;-webkit-text-stroke:0.6px currentColor;">My Tasks</div>
<svg class="a" style="left:402.40px;top:757.70px;" width="16.00" height="13.10" viewBox="0 0 18.1 15.4" preserveAspectRatio="none"><path d="M1 1v13.4h16.1" fill="none" stroke="#475569" stroke-width="2" stroke-linecap="round" stroke-linejoin="round"/><path d="M5.3 3.6h3.4M7.9 7.2h3.600M11.800 10.800h3.600" stroke="#475569" stroke-width="2" stroke-linecap="round"/></svg>
<div class="t" style="left:426.50px;top:755.95px;font-size:14.5px;line-height:14.5px;color:#6b7280;">My Projects</div>
<svg class="a" style="left:526.47px;top:754.56px;overflow:visible" width="19.067" height="18.267" viewBox="0 0 24 24" preserveAspectRatio="none"><path d="M12 6.8v5.2l3.6 3.3M21 12a9 9 0 1 1-18 0 9 9 0 0 1 18 0Z" fill="none" stroke="#475569" stroke-width="1.7" stroke-linecap="round" stroke-linejoin="round" vector-effect="non-scaling-stroke" /></svg>
<div class="t" style="left:552.40px;top:756.08px;font-size:14.25px;line-height:14.25px;color:#6b7280;">My Reminders</div>
<svg class="a" style="left:669.90px;top:756.00px;" width="16.10" height="15.60" viewBox="0 0 18.1 17.6" preserveAspectRatio="none"><circle cx="9.05" cy="8.8" r="7.9" fill="none" stroke="#475569" stroke-width="2"/><circle cx="9.05" cy="8.8" r="3.3" fill="none" stroke="#475569" stroke-width="2"/><path d="M1.6 1.3l5 5M16.5 1.3l-5 5M1.6 16.3l5-5M16.5 16.3l-5-5" stroke="#475569" stroke-width="2"/></svg>
<div class="t" style="left:694.30px;top:755.95px;font-size:14.5px;line-height:14.5px;color:#6b7280;">Tickets</div>
<svg class="a" style="left:766.00px;top:756.40px;overflow:visible" width="16.700" height="15.598" viewBox="0 0 512 512" preserveAspectRatio="none"><path d="M480 32c0-12.9-7.8-24.6-19.8-29.6s-25.7-2.2-34.9 6.900L381.700 52.7C333.700 100.7 268.600 128 200.700 128H192 160 64c-35.300 0-64 28.700-64 64v96c0 35.300 28.700 64 64 64V480c0 17.700 14.300 32 32 32h64c17.700 0 32-14.300 32-32V352h8.700c67.900 0 133 27.300 181 75.300l43.600 43.600c9.200 9.200 22.900 11.900 34.900 6.900s19.800-16.600 19.800-29.600V300.400c18.600-8.800 32-32.500 32-60.400s-13.400-51.600-32-60.400V32zm-64 76.700V240 371.300C357.200 317.800 280.500 288 200.700 288H192V192h8.700c79.800 0 156.500-29.800 215.300-83.300z" fill="#475569" /></svg>
<div class="t" style="left:790.80px;top:755.95px;font-size:14.5px;line-height:14.5px;color:#6b7280;">Announcements</div>
<div class="a" style="left:921.70px;top:756.90px;width:16.10px;height:14.00px;background:#475569;border-radius:2px;"></div>
<div class="a" style="left:923.60px;top:759.10px;width:12.30px;height:1.60px;background:#fff;"></div>
<div class="t" style="left:945.60px;top:755.20px;font-size:15px;line-height:15px;color:#6b7280;">Latest Activity</div>
<div class="t" style="left:280.60px;top:818.48px;font-size:14.25px;line-height:14.25px;color:#2f5fcf;">View All</div>
<div class="a" style="left:280.00px;top:857.00px;width:74.50px;height:30.00px;background:#fff;border:1px solid #d6d9de;border-radius:5px;"></div>
<div class="t" style="left:295.50px;top:865.02px;font-size:12.75px;line-height:12.75px;color:#374151;">25</div>
<svg class="a" style="left:340.30px;top:869.20px;" width="9.50" height="6.00" viewBox="0 0 9.5 6" preserveAspectRatio="none"><path d="M1 1 4.75 4.8 8.5 1" fill="none" stroke="#374151" stroke-width="1.9" stroke-linecap="round" stroke-linejoin="round"/></svg>
<div class="a" style="left:360.00px;top:857.00px;width:93.00px;height:30.00px;background:#fff;border:1px solid #d6d9de;border-radius:5px;"></div>
<div class="a" style="left:419.00px;top:857.00px;width:1.00px;height:30.00px;background:#d6d9de;"></div>
<div class="t" style="left:371.60px;top:865.12px;font-size:12.75px;line-height:12.75px;color:#374151;">Export</div>
<svg class="a" style="left:429.49px;top:865.01px;overflow:visible" width="13.016" height="12.572" viewBox="0 0 512 512" preserveAspectRatio="none"><path d="M105.1 202.6c7.7-21.8 20.2-42.3 37.8-59.8c62.5-62.5 163.8-62.5 226.3 0L386.3 160H352c-17.7 0-32 14.3-32 32s14.3 32 32 32H463.5c0 0 0 0 0 0h.4c17.7 0 32-14.3 32-32V80c0-17.7-14.3-32-32-32s-32 14.3-32 32v35.2L414.4 97.6c-87.5-87.5-229.3-87.5-316.8 0C73.2 122 55.6 150.7 44.8 181.4c-5.9 16.7 2.9 34.9 19.5 40.8s34.9-2.9 40.8-19.5zM39 289.3c-5 1.5-9.8 4.2-13.7 8.2c-4 4-6.7 8.8-8.1 14c-.3 1.2-.6 2.5-.8 3.8c-.3 1.7-.4 3.4-.4 5.1V432c0 17.7 14.3 32 32 32s32-14.3 32-32V396.9l17.6 17.5 0 0c87.5 87.4 229.3 87.4 316.7 0c24.4-24.4 42.1-53.1 52.9-83.7c5.9-16.7-2.9-34.9-19.5-40.8s-34.9 2.9-40.8 19.5c-7.7 21.8-20.2 42.3-37.8 59.8c-62.5 62.5-163.8 62.5-226.3 0l-.1-.1L125.6 352H160c17.7 0 32-14.3 32-32s-14.3-32-32-32H48.4c-1.6 0-3.2 .1-4.8 .3s-3.1 .5-4.6 1z" fill="#1f2937" /></svg>
<div class="a" style="left:1027.00px;top:857.00px;width:243.00px;height:30.00px;background:#fff;border:1px solid #d6d9de;border-radius:5px;"></div>
<div class="a" style="left:1072.00px;top:857.00px;width:1.00px;height:30.00px;background:#d6d9de;"></div>
<svg class="a" style="left:1043.00px;top:865.80px;overflow:visible" width="14.501" height="12.498" viewBox="0 0 512 512" preserveAspectRatio="none"><path d="M416 208c0 45.9-14.9 88.3-40 122.700L502.600 457.400c12.500 12.500 12.500 32.800 0 45.300s-32.800 12.500-45.300 0L330.700 376c-34.400 25.200-76.800 40-122.700 40C93.100 416 0 322.900 0 208S93.100 0 208 0S416 93.100 416 208zM208 352a144 144 0 1 0 0-288 144 144 0 1 0 0 288z" fill="#1f2937" /></svg>
<div class="t" style="left:1083.30px;top:865.05px;font-size:13.5px;line-height:13.5px;color:#9ca3af;">Search...</div>
<div class="a" style="left:280.00px;top:899.00px;width:990.00px;height:20.00px;background:#f7f8fa;border:1px solid #e5e7eb;"></div>
<div class="a" style="left:335.00px;top:899.00px;width:1.00px;height:20.00px;background:#e5e7eb;"></div>
<div class="a" style="left:720.00px;top:899.00px;width:1.00px;height:20.00px;background:#e5e7eb;"></div>
<div class="a" style="left:901.00px;top:899.00px;width:1.00px;height:20.00px;background:#e5e7eb;"></div>
<div class="a" style="left:1018.00px;top:899.00px;width:1.00px;height:20.00px;background:#e5e7eb;"></div>
<div class="a" style="left:1171.00px;top:899.00px;width:1.00px;height:20.00px;background:#e5e7eb;"></div>
<div class="a" style="left:1285.00px;top:817.00px;width:17.00px;height:100.00px;background:#f1f1f1;"></div>
<svg class="a" style="left:1289.50px;top:823.50px;" width="8.00" height="4.50" viewBox="0 0 8 4.5" preserveAspectRatio="none"><path d="M0 4.5 4 0 8 4.5z" fill="#a3a3a3"/></svg>
<div class="a" style="left:1287.00px;top:834.00px;width:13.00px;height:80.00px;background:#c1c1c1;"></div>
<div class="a" style="left:1357.00px;top:211.00px;width:521.00px;height:660.00px;background:#fff;border:1px solid #e6e7ea;border-radius:7px;box-shadow:0 2px 4px rgba(0,0,0,.07);"></div>
<div class="a" style="left:1343.00px;top:229.60px;width:4.00px;height:3.60px;background:#d3d9e3;border-radius:1.3px;"></div>
<div class="a" style="left:1348.10px;top:229.60px;width:4.00px;height:3.60px;background:#d3d9e3;border-radius:1.3px;"></div>
<div class="a" style="left:1343.00px;top:233.90px;width:4.00px;height:3.60px;background:#d3d9e3;border-radius:1.3px;"></div>
<div class="a" style="left:1348.10px;top:233.90px;width:4.00px;height:3.60px;background:#d3d9e3;border-radius:1.3px;"></div>
<div class="a" style="left:1343.00px;top:238.20px;width:4.00px;height:3.60px;background:#d3d9e3;border-radius:1.3px;"></div>
<div class="a" style="left:1348.10px;top:238.20px;width:4.00px;height:3.60px;background:#d3d9e3;border-radius:1.3px;"></div>
<svg class="a" style="left:1374.03px;top:227.93px;overflow:visible" width="23.733" height="23.733" viewBox="0 0 24 24" preserveAspectRatio="none"><path d="M9 12.75 11.25 15 15 9.75M21 12c0 1.268-.63 2.39-1.593 3.068a3.745 3.745 0 0 1-1.043 3.296 3.745 3.745 0 0 1-3.296 1.043A3.745 3.745 0 0 1 12 21c-1.268 0-2.39-.63-3.068-1.593a3.746 3.746 0 0 1-3.296-1.043 3.745 3.745 0 0 1-1.043-3.296A3.745 3.745 0 0 1 3 12c0-1.268.63-2.39 1.593-3.068a3.745 3.745 0 0 1 1.043-3.296 3.746 3.746 0 0 1 3.296-1.043A3.746 3.746 0 0 1 12 3c1.268 0 2.39.63 3.068 1.593a3.746 3.746 0 0 1 3.296 1.043 3.746 3.746 0 0 1 1.043 3.296A3.745 3.745 0 0 1 21 12Z" fill="none" stroke="#4b5563" stroke-width="1.4" stroke-linecap="round" stroke-linejoin="round" vector-effect="non-scaling-stroke" /></svg>
<div class="t" style="left:1404.40px;top:231.65px;font-size:14.5px;line-height:14.5px;color:#1f2937;-webkit-text-stroke:0.6px currentColor;">My To Do Items</div>
<div class="t" style="left:1726.30px;top:232.62px;font-size:13.75px;line-height:13.75px;color:#2f5fcf;">View All</div>
<div class="a" style="left:1786.00px;top:232.00px;width:1.00px;height:15.00px;background:#d1d5db;"></div>
<div class="t" style="left:1794.80px;top:232.75px;font-size:13.5px;line-height:13.5px;color:#2f5fcf;">New To Do</div>
<div class="a" style="left:1358.00px;top:266.00px;width:519.00px;height:1.00px;background:#eceef1;"></div>
<svg class="a" style="left:1377.90px;top:289.94px;overflow:visible" width="13.801" height="13.714" viewBox="0 0 512 512" preserveAspectRatio="none"><path d="M256 32c14.2 0 27.3 7.5 34.5 19.8l216 368c7.3 12.4 7.3 27.7 .2 40.1S486.3 480 472 480H40c-14.3 0-27.6-7.7-34.7-20.1s-7-27.8 .2-40.1l216-368C228.7 39.5 241.8 32 256 32zm0 128c-13.3 0-24 10.7-24 24V296c0 13.3 10.7 24 24 24s24-10.7 24-24V184c0-13.3-10.7-24-24-24zm32 224a32 32 0 1 0 -64 0 32 32 0 1 0 64 0z" fill="#c48b2c" /></svg>
<div class="t" style="left:1396.20px;top:289.10px;font-size:15.2px;line-height:15.2px;color:#c48b2c;-webkit-text-stroke:0.6px currentColor;">Latest to do&#39;s</div>
<svg class="a" style="left:1380.60px;top:339.90px;" width="8.00" height="17.00" viewBox="0 0 8 17" preserveAspectRatio="none"><rect x="0.0" y="0.0" width="1.25" height="1.25" fill="#8f96a1"/><rect x="3.2" y="0.0" width="1.25" height="1.25" fill="#8f96a1"/><rect x="6.4" y="0.0" width="1.25" height="1.25" fill="#8f96a1"/><rect x="0.0" y="3.0" width="1.25" height="1.25" fill="#8f96a1"/><rect x="3.2" y="3.0" width="1.25" height="1.25" fill="#8f96a1"/><rect x="6.4" y="3.0" width="1.25" height="1.25" fill="#8f96a1"/><rect x="0.0" y="6.1" width="1.25" height="1.25" fill="#8f96a1"/><rect x="3.2" y="6.1" width="1.25" height="1.25" fill="#8f96a1"/><rect x="6.4" y="6.1" width="1.25" height="1.25" fill="#8f96a1"/><rect x="0.0" y="9.1" width="1.25" height="1.25" fill="#8f96a1"/><rect x="3.2" y="9.1" width="1.25" height="1.25" fill="#8f96a1"/><rect x="6.4" y="9.1" width="1.25" height="1.25" fill="#8f96a1"/><rect x="0.0" y="12.2" width="1.25" height="1.25" fill="#8f96a1"/><rect x="3.2" y="12.2" width="1.25" height="1.25" fill="#8f96a1"/><rect x="6.4" y="12.2" width="1.25" height="1.25" fill="#8f96a1"/><rect x="0.0" y="15.2" width="1.25" height="1.25" fill="#8f96a1"/><rect x="3.2" y="15.2" width="1.25" height="1.25" fill="#8f96a1"/><rect x="6.4" y="15.2" width="1.25" height="1.25" fill="#8f96a1"/></svg>
<div class="a" style="left:1400.00px;top:339.20px;width:17.00px;height:17.00px;background:#fff;border:1px solid #d1d5db;border-radius:3px;box-shadow:0 1px 1px rgba(0,0,0,.04);"></div>
<div class="t" style="left:1425.50px;top:341.45px;font-size:13.7px;line-height:13.7px;color:#1f2937;">Dormouse,&#39;.</div>
<div class="t" style="left:1425.50px;top:359.93px;font-size:13.75px;line-height:13.75px;color:#6b7280;">2024-11-05 18:36:25</div>
<svg class="a" style="left:1815.90px;top:359.60px;overflow:visible" width="14.118" height="14.114" viewBox="0 0 512 512" preserveAspectRatio="none"><path d="M410.3 231l11.3-11.3-33.9-33.9-62.1-62.1L291.7 89.8l-11.3 11.3-22.6 22.6L58.6 322.9c-10.4 10.4-18 23.3-22.2 37.4L1 480.7c-2.5 8.4-.2 17.5 6.1 23.7s15.3 8.5 23.7 6.1l120.3-35.4c14.1-4.2 27-11.8 37.4-22.2L387.7 253.7 410.3 231zM362.7 18.7L348.3 33.2 325.7 55.8 314.3 67.1l33.9 33.9 62.1 62.1 33.9 33.9 11.3-11.3 22.6-22.6 14.5-14.5c25-25 25-65.5 0-90.5L453.3 18.7c-25-25-65.5-25-90.5 0z" fill="#4b5563" /></svg>
<svg class="a" style="left:1841.40px;top:362.30px;" width="11.00" height="10.50" viewBox="0 0 11 10.5" preserveAspectRatio="none"><path d="M1 1 10 9.5M10 1 1 9.5" stroke="#4b5563" stroke-width="2" stroke-linecap="round"/></svg>
<div class="a" style="left:1358.00px;top:390.00px;width:519.00px;height:1.00px;background:#eceef1;"></div>
<svg class="a" style="left:1380.60px;top:409.90px;" width="8.00" height="17.00" viewBox="0 0 8 17" preserveAspectRatio="none"><rect x="0.0" y="0.0" width="1.25" height="1.25" fill="#8f96a1"/><rect x="3.2" y="0.0" width="1.25" height="1.25" fill="#8f96a1"/><rect x="6.4" y="0.0" width="1.25" height="1.25" fill="#8f96a1"/><rect x="0.0" y="3.0" width="1.25" height="1.25" fill="#8f96a1"/><rect x="3.2" y="3.0" width="1.25" height="1.25" fill="#8f96a1"/><rect x="6.4" y="3.0" width="1.25" height="1.25" fill="#8f96a1"/><rect x="0.0" y="6.1" width="1.25" height="1.25" fill="#8f96a1"/><rect x="3.2" y="6.1" width="1.25" height="1.25" fill="#8f96a1"/><rect x="6.4" y="6.1" width="1.25" height="1.25" fill="#8f96a1"/><rect x="0.0" y="9.1" width="1.25" height="1.25" fill="#8f96a1"/><rect x="3.2" y="9.1" width="1.25" height="1.25" fill="#8f96a1"/><rect x="6.4" y="9.1" width="1.25" height="1.25" fill="#8f96a1"/><rect x="0.0" y="12.2" width="1.25" height="1.25" fill="#8f96a1"/><rect x="3.2" y="12.2" width="1.25" height="1.25" fill="#8f96a1"/><rect x="6.4" y="12.2" width="1.25" height="1.25" fill="#8f96a1"/><rect x="0.0" y="15.2" width="1.25" height="1.25" fill="#8f96a1"/><rect x="3.2" y="15.2" width="1.25" height="1.25" fill="#8f96a1"/><rect x="6.4" y="15.2" width="1.25" height="1.25" fill="#8f96a1"/></svg>
<div class="a" style="left:1400.00px;top:409.20px;width:17.00px;height:17.00px;background:#fff;border:1px solid #d1d5db;border-radius:3px;box-shadow:0 1px 1px rgba(0,0,0,.04);"></div>
<div class="t" style="left:1425.50px;top:410.65px;font-size:14.3px;line-height:14.3px;color:#1f2937;">Alice; &#39;you needn&#39;t be so kind,&#39; Alice replied.</div>
<div class="t" style="left:1425.50px;top:429.93px;font-size:13.75px;line-height:13.75px;color:#6b7280;">2024-11-05 18:36:25</div>
<svg class="a" style="left:1815.90px;top:429.60px;overflow:visible" width="14.118" height="14.114" viewBox="0 0 512 512" preserveAspectRatio="none"><path d="M410.3 231l11.3-11.3-33.9-33.9-62.1-62.1L291.7 89.8l-11.3 11.3-22.6 22.6L58.6 322.9c-10.4 10.4-18 23.3-22.2 37.4L1 480.7c-2.5 8.4-.2 17.5 6.1 23.7s15.3 8.5 23.7 6.1l120.3-35.4c14.1-4.2 27-11.8 37.4-22.2L387.7 253.7 410.3 231zM362.7 18.7L348.3 33.2 325.7 55.8 314.3 67.1l33.9 33.9 62.1 62.1 33.9 33.9 11.3-11.3 22.6-22.6 14.5-14.5c25-25 25-65.5 0-90.5L453.3 18.7c-25-25-65.5-25-90.5 0z" fill="#4b5563" /></svg>
<svg class="a" style="left:1841.40px;top:432.30px;" width="11.00" height="10.50" viewBox="0 0 11 10.5" preserveAspectRatio="none"><path d="M1 1 10 9.5M10 1 1 9.5" stroke="#4b5563" stroke-width="2" stroke-linecap="round"/></svg>
<div class="a" style="left:1358.00px;top:460.00px;width:519.00px;height:1.00px;background:#eceef1;"></div>
<svg class="a" style="left:1380.60px;top:478.90px;" width="8.00" height="17.00" viewBox="0 0 8 17" preserveAspectRatio="none"><rect x="0.0" y="0.0" width="1.25" height="1.25" fill="#8f96a1"/><rect x="3.2" y="0.0" width="1.25" height="1.25" fill="#8f96a1"/><rect x="6.4" y="0.0" width="1.25" height="1.25" fill="#8f96a1"/><rect x="0.0" y="3.0" width="1.25" height="1.25" fill="#8f96a1"/><rect x="3.2" y="3.0" width="1.25" height="1.25" fill="#8f96a1"/><rect x="6.4" y="3.0" width="1.25" height="1.25" fill="#8f96a1"/><rect x="0.0" y="6.1" width="1.25" height="1.25" fill="#8f96a1"/><rect x="3.2" y="6.1" width="1.25" height="1.25" fill="#8f96a1"/><rect x="6.4" y="6.1" width="1.25" height="1.25" fill="#8f96a1"/><rect x="0.0" y="9.1" width="1.25" height="1.25" fill="#8f96a1"/><rect x="3.2" y="9.1" width="1.25" height="1.25" fill="#8f96a1"/><rect x="6.4" y="9.1" width="1.25" height="1.25" fill="#8f96a1"/><rect x="0.0" y="12.2" width="1.25" height="1.25" fill="#8f96a1"/><rect x="3.2" y="12.2" width="1.25" height="1.25" fill="#8f96a1"/><rect x="6.4" y="12.2" width="1.25" height="1.25" fill="#8f96a1"/><rect x="0.0" y="15.2" width="1.25" height="1.25" fill="#8f96a1"/><rect x="3.2" y="15.2" width="1.25" height="1.25" fill="#8f96a1"/><rect x="6.4" y="15.2" width="1.25" height="1.25" fill="#8f96a1"/></svg>
<div class="a" style="left:1400.00px;top:478.20px;width:17.00px;height:17.00px;background:#fff;border:1px solid #d1d5db;border-radius:3px;box-shadow:0 1px 1px rgba(0,0,0,.04);"></div>
<div class="t" style="left:1425.50px;top:479.65px;font-size:14.3px;line-height:14.3px;color:#1f2937;">Hatter. &#39;Nor I,&#39; said the Gryphon. &#39;Do you.</div>
<div class="t" style="left:1425.50px;top:498.93px;font-size:13.75px;line-height:13.75px;color:#6b7280;">2024-11-05 18:36:25</div>
<svg class="a" style="left:1815.90px;top:498.60px;overflow:visible" width="14.118" height="14.114" viewBox="0 0 512 512" preserveAspectRatio="none"><path d="M410.3 231l11.3-11.3-33.9-33.9-62.1-62.1L291.7 89.8l-11.3 11.3-22.6 22.6L58.6 322.9c-10.4 10.4-18 23.3-22.2 37.4L1 480.7c-2.5 8.4-.2 17.5 6.1 23.7s15.3 8.5 23.7 6.1l120.3-35.4c14.1-4.2 27-11.8 37.4-22.2L387.7 253.7 410.3 231zM362.7 18.7L348.3 33.2 325.7 55.8 314.3 67.1l33.9 33.9 62.1 62.1 33.9 33.9 11.3-11.3 22.6-22.6 14.5-14.5c25-25 25-65.5 0-90.5L453.3 18.7c-25-25-65.5-25-90.5 0z" fill="#4b5563" /></svg>
<svg class="a" style="left:1841.40px;top:501.30px;" width="11.00" height="10.50" viewBox="0 0 11 10.5" preserveAspectRatio="none"><path d="M1 1 10 9.5M10 1 1 9.5" stroke="#4b5563" stroke-width="2" stroke-linecap="round"/></svg>
<div class="a" style="left:1358.00px;top:529.00px;width:519.00px;height:1.00px;background:#eceef1;"></div>
<svg class="a" style="left:1378.75px;top:555.60px;" width="12.50" height="8.60" viewBox="0 0 12.5 8.6" preserveAspectRatio="none"><path d="M1 4.3 4.3 7.5 11.5 1" fill="none" stroke="#22a05a" stroke-width="2" stroke-linecap="round" stroke-linejoin="round"/></svg>
<div class="t" style="left:1396.25px;top:551.90px;font-size:15.2px;line-height:15.2px;color:#22a05a;-webkit-text-stroke:0.6px currentColor;">Latest finished to do&#39;s</div>
<svg class="a" style="left:1381.00px;top:601.00px;" width="8.00" height="17.00" viewBox="0 0 8 17" preserveAspectRatio="none"><rect x="0.0" y="0.0" width="1.25" height="1.25" fill="#8f96a1"/><rect x="3.2" y="0.0" width="1.25" height="1.25" fill="#8f96a1"/><rect x="6.4" y="0.0" width="1.25" height="1.25" fill="#8f96a1"/><rect x="0.0" y="3.0" width="1.25" height="1.25" fill="#8f96a1"/><rect x="3.2" y="3.0" width="1.25" height="1.25" fill="#8f96a1"/><rect x="6.4" y="3.0" width="1.25" height="1.25" fill="#8f96a1"/><rect x="0.0" y="6.1" width="1.25" height="1.25" fill="#8f96a1"/><rect x="3.2" y="6.1" width="1.25" height="1.25" fill="#8f96a1"/><rect x="6.4" y="6.1" width="1.25" height="1.25" fill="#8f96a1"/><rect x="0.0" y="9.1" width="1.25" height="1.25" fill="#8f96a1"/><rect x="3.2" y="9.1" width="1.25" height="1.25" fill="#8f96a1"/><rect x="6.4" y="9.1" width="1.25" height="1.25" fill="#8f96a1"/><rect x="0.0" y="12.2" width="1.25" height="1.25" fill="#8f96a1"/><rect x="3.2" y="12.2" width="1.25" height="1.25" fill="#8f96a1"/><rect x="6.4" y="12.2" width="1.25" height="1.25" fill="#8f96a1"/><rect x="0.0" y="15.2" width="1.25" height="1.25" fill="#8f96a1"/><rect x="3.2" y="15.2" width="1.25" height="1.25" fill="#8f96a1"/><rect x="6.4" y="15.2" width="1.25" height="1.25" fill="#8f96a1"/></svg>
<div class="a" style="left:1400.00px;top:600.40px;width:17.00px;height:17.00px;background:#fff;border:1px solid #d1d5db;border-radius:3px;"></div>
<svg class="a" style="left:1403.10px;top:604.60px;" width="12.00" height="9.70" viewBox="0 0 12 9.7" preserveAspectRatio="none"><path d="M1.8 5.2 4.8 8 10.4 1.9" fill="none" stroke="#2b3441" stroke-width="3" stroke-linecap="square" stroke-linejoin="miter"/></svg>
<div class="t" style="left:1425.50px;top:601.20px;font-size:14.4px;line-height:14.4px;color:#1f2937;text-decoration:line-through;">Hatter trembled so, that he had.</div>
<div class="t" style="left:1425.50px;top:620.52px;font-size:13.75px;line-height:13.75px;color:#6b7280;">2024-11-05 18:36:25</div>
<svg class="a" style="left:1825.00px;top:620.70px;overflow:visible" width="14.218" height="14.214" viewBox="0 0 512 512" preserveAspectRatio="none"><path d="M410.3 231l11.3-11.3-33.9-33.9-62.1-62.1L291.7 89.8l-11.3 11.3-22.6 22.6L58.6 322.9c-10.4 10.4-18 23.3-22.2 37.4L1 480.7c-2.5 8.4-.2 17.5 6.1 23.7s15.3 8.5 23.7 6.1l120.3-35.4c14.1-4.2 27-11.8 37.4-22.2L387.7 253.7 410.3 231zM362.7 18.7L348.3 33.2 325.7 55.8 314.3 67.1l33.9 33.9 62.1 62.1 33.9 33.9 11.3-11.3 22.6-22.6 14.5-14.5c25-25 25-65.5 0-90.5L453.3 18.7c-25-25-65.5-25-90.5 0z" fill="#4b5563" /></svg>
<svg class="a" style="left:1843.50px;top:623.00px;" width="8.50" height="9.00" viewBox="0 0 8.5 9" preserveAspectRatio="none"><path d="M1 1 7.5 8M7.5 1 1 8" stroke="#4b5563" stroke-width="1.8" stroke-linecap="round"/></svg>
<div class="a" style="left:1358.00px;top:650.00px;width:519.00px;height:1.00px;background:#eceef1;"></div>
<svg class="a" style="left:1381.00px;top:670.40px;" width="8.00" height="17.00" viewBox="0 0 8 17" preserveAspectRatio="none"><rect x="0.0" y="0.0" width="1.25" height="1.25" fill="#8f96a1"/><rect x="3.2" y="0.0" width="1.25" height="1.25" fill="#8f96a1"/><rect x="6.4" y="0.0" width="1.25" height="1.25" fill="#8f96a1"/><rect x="0.0" y="3.0" width="1.25" height="1.25" fill="#8f96a1"/><rect x="3.2" y="3.0" width="1.25" height="1.25" fill="#8f96a1"/><rect x="6.4" y="3.0" width="1.25" height="1.25" fill="#8f96a1"/><rect x="0.0" y="6.1" width="1.25" height="1.25" fill="#8f96a1"/><rect x="3.2" y="6.1" width="1.25" height="1.25" fill="#8f96a1"/><rect x="6.4" y="6.1" width="1.25" height="1.25" fill="#8f96a1"/><rect x="0.0" y="9.1" width="1.25" height="1.25" fill="#8f96a1"/><rect x="3.2" y="9.1" width="1.25" height="1.25" fill="#8f96a1"/><rect x="6.4" y="9.1" width="1.25" height="1.25" fill="#8f96a1"/><rect x="0.0" y="12.2" width="1.25" height="1.25" fill="#8f96a1"/><rect x="3.2" y="12.2" width="1.25" height="1.25" fill="#8f96a1"/><rect x="6.4" y="12.2" width="1.25" height="1.25" fill="#8f96a1"/><rect x="0.0" y="15.2" width="1.25" height="1.25" fill="#8f96a1"/><rect x="3.2" y="15.2" width="1.25" height="1.25" fill="#8f96a1"/><rect x="6.4" y="15.2" width="1.25" height="1.25" fill="#8f96a1"/></svg>
<div class="a" style="left:1400.00px;top:669.80px;width:17.00px;height:17.00px;background:#fff;border:1px solid #d1d5db;border-radius:3px;"></div>
<svg class="a" style="left:1403.10px;top:674.00px;" width="12.00" height="9.70" viewBox="0 0 12 9.7" preserveAspectRatio="none"><path d="M1.8 5.2 4.8 8 10.4 1.9" fill="none" stroke="#2b3441" stroke-width="3" stroke-linecap="square" stroke-linejoin="miter"/></svg>
<div class="t" style="left:1425.50px;top:670.60px;font-size:14.4px;line-height:14.4px;color:#1f2937;text-decoration:line-through;">Mock Turtle, and said to herself how this.</div>
<div class="t" style="left:1425.50px;top:689.92px;font-size:13.75px;line-height:13.75px;color:#6b7280;">2024-11-03 18:36:25</div>
<svg class="a" style="left:1825.00px;top:690.10px;overflow:visible" width="14.218" height="14.214" viewBox="0 0 512 512" preserveAspectRatio="none"><path d="M410.3 231l11.3-11.3-33.9-33.9-62.1-62.1L291.7 89.8l-11.3 11.3-22.6 22.6L58.6 322.9c-10.4 10.4-18 23.3-22.2 37.4L1 480.7c-2.5 8.4-.2 17.5 6.1 23.7s15.3 8.5 23.7 6.1l120.3-35.4c14.1-4.2 27-11.8 37.4-22.2L387.7 253.7 410.3 231zM362.7 18.7L348.3 33.2 325.7 55.8 314.3 67.1l33.9 33.9 62.1 62.1 33.9 33.9 11.3-11.3 22.6-22.6 14.5-14.5c25-25 25-65.5 0-90.5L453.3 18.7c-25-25-65.5-25-90.5 0z" fill="#4b5563" /></svg>
<svg class="a" style="left:1843.50px;top:692.40px;" width="8.50" height="9.00" viewBox="0 0 8.5 9" preserveAspectRatio="none"><path d="M1 1 7.5 8M7.5 1 1 8" stroke="#4b5563" stroke-width="1.8" stroke-linecap="round"/></svg>
<div class="a" style="left:1358.00px;top:720.00px;width:519.00px;height:1.00px;background:#eceef1;"></div>
<svg class="a" style="left:1381.00px;top:740.40px;" width="8.00" height="17.00" viewBox="0 0 8 17" preserveAspectRatio="none"><rect x="0.0" y="0.0" width="1.25" height="1.25" fill="#8f96a1"/><rect x="3.2" y="0.0" width="1.25" height="1.25" fill="#8f96a1"/><rect x="6.4" y="0.0" width="1.25" height="1.25" fill="#8f96a1"/><rect x="0.0" y="3.0" width="1.25" height="1.25" fill="#8f96a1"/><rect x="3.2" y="3.0" width="1.25" height="1.25" fill="#8f96a1"/><rect x="6.4" y="3.0" width="1.25" height="1.25" fill="#8f96a1"/><rect x="0.0" y="6.1" width="1.25" height="1.25" fill="#8f96a1"/><rect x="3.2" y="6.1" width="1.25" height="1.25" fill="#8f96a1"/><rect x="6.4" y="6.1" width="1.25" height="1.25" fill="#8f96a1"/><rect x="0.0" y="9.1" width="1.25" height="1.25" fill="#8f96a1"/><rect x="3.2" y="9.1" width="1.25" height="1.25" fill="#8f96a1"/><rect x="6.4" y="9.1" width="1.25" height="1.25" fill="#8f96a1"/><rect x="0.0" y="12.2" width="1.25" height="1.25" fill="#8f96a1"/><rect x="3.2" y="12.2" width="1.25" height="1.25" fill="#8f96a1"/><rect x="6.4" y="12.2" width="1.25" height="1.25" fill="#8f96a1"/><rect x="0.0" y="15.2" width="1.25" height="1.25" fill="#8f96a1"/><rect x="3.2" y="15.2" width="1.25" height="1.25" fill="#8f96a1"/><rect x="6.4" y="15.2" width="1.25" height="1.25" fill="#8f96a1"/></svg>
<div class="a" style="left:1400.00px;top:739.80px;width:17.00px;height:17.00px;background:#fff;border:1px solid #d1d5db;border-radius:3px;"></div>
<svg class="a" style="left:1403.10px;top:744.00px;" width="12.00" height="9.70" viewBox="0 0 12 9.7" preserveAspectRatio="none"><path d="M1.8 5.2 4.8 8 10.4 1.9" fill="none" stroke="#2b3441" stroke-width="3" stroke-linecap="square" stroke-linejoin="miter"/></svg>
<div class="t" style="left:1425.50px;top:740.60px;font-size:14.4px;line-height:14.4px;color:#1f2937;text-decoration:line-through;">Alice found at first was in.</div>
<div class="t" style="left:1425.50px;top:759.92px;font-size:13.75px;line-height:13.75px;color:#6b7280;">2024-11-01 18:36:25</div>
<svg class="a" style="left:1825.00px;top:760.10px;overflow:visible" width="14.218" height="14.214" viewBox="0 0 512 512" preserveAspectRatio="none"><path d="M410.3 231l11.3-11.3-33.9-33.9-62.1-62.1L291.7 89.8l-11.3 11.3-22.6 22.6L58.6 322.9c-10.4 10.4-18 23.3-22.2 37.4L1 480.7c-2.5 8.4-.2 17.5 6.1 23.7s15.3 8.5 23.7 6.1l120.3-35.4c14.1-4.2 27-11.8 37.4-22.2L387.7 253.7 410.3 231zM362.7 18.7L348.3 33.2 325.7 55.8 314.3 67.1l33.9 33.9 62.1 62.1 33.9 33.9 11.3-11.3 22.6-22.6 14.5-14.5c25-25 25-65.5 0-90.5L453.3 18.7c-25-25-65.5-25-90.5 0z" fill="#4b5563" /></svg>
<svg class="a" style="left:1843.50px;top:762.40px;" width="8.50" height="9.00" viewBox="0 0 8.5 9" preserveAspectRatio="none"><path d="M1 1 7.5 8M7.5 1 1 8" stroke="#4b5563" stroke-width="1.8" stroke-linecap="round"/></svg>
<div class="a" style="left:1358.00px;top:790.00px;width:519.00px;height:1.00px;background:#eceef1;"></div>
<svg class="a" style="left:1381.00px;top:809.40px;" width="8.00" height="17.00" viewBox="0 0 8 17" preserveAspectRatio="none"><rect x="0.0" y="0.0" width="1.25" height="1.25" fill="#8f96a1"/><rect x="3.2" y="0.0" width="1.25" height="1.25" fill="#8f96a1"/><rect x="6.4" y="0.0" width="1.25" height="1.25" fill="#8f96a1"/><rect x="0.0" y="3.0" width="1.25" height="1.25" fill="#8f96a1"/><rect x="3.2" y="3.0" width="1.25" height="1.25" fill="#8f96a1"/><rect x="6.4" y="3.0" width="1.25" height="1.25" fill="#8f96a1"/><rect x="0.0" y="6.1" width="1.25" height="1.25" fill="#8f96a1"/><rect x="3.2" y="6.1" width="1.25" height="1.25" fill="#8f96a1"/><rect x="6.4" y="6.1" width="1.25" height="1.25" fill="#8f96a1"/><rect x="0.0" y="9.1" width="1.25" height="1.25" fill="#8f96a1"/><rect x="3.2" y="9.1" width="1.25" height="1.25" fill="#8f96a1"/><rect x="6.4" y="9.1" width="1.25" height="1.25" fill="#8f96a1"/><rect x="0.0" y="12.2" width="1.25" height="1.25" fill="#8f96a1"/><rect x="3.2" y="12.2" width="1.25" height="1.25" fill="#8f96a1"/><rect x="6.4" y="12.2" width="1.25" height="1.25" fill="#8f96a1"/><rect x="0.0" y="15.2" width="1.25" height="1.25" fill="#8f96a1"/><rect x="3.2" y="15.2" width="1.25" height="1.25" fill="#8f96a1"/><rect x="6.4" y="15.2" width="1.25" height="1.25" fill="#8f96a1"/></svg>
<div class="a" style="left:1400.00px;top:808.80px;width:17.00px;height:17.00px;background:#fff;border:1px solid #d1d5db;border-radius:3px;"></div>
<svg class="a" style="left:1403.10px;top:813.00px;" width="12.00" height="9.70" viewBox="0 0 12 9.7" preserveAspectRatio="none"><path d="M1.8 5.2 4.8 8 10.4 1.9" fill="none" stroke="#2b3441" stroke-width="3" stroke-linecap="square" stroke-linejoin="miter"/></svg>
<div class="t" style="left:1425.50px;top:809.60px;font-size:14.4px;line-height:14.4px;color:#1f2937;text-decoration:line-through;">Let me see: I&#39;ll give them a new.</div>
<div class="t" style="left:1425.50px;top:828.92px;font-size:13.75px;line-height:13.75px;color:#6b7280;">2024-10-30 18:36:25</div>
<svg class="a" style="left:1825.00px;top:829.10px;overflow:visible" width="14.218" height="14.214" viewBox="0 0 512 512" preserveAspectRatio="none"><path d="M410.3 231l11.3-11.3-33.9-33.9-62.1-62.1L291.7 89.8l-11.3 11.3-22.6 22.6L58.6 322.9c-10.4 10.4-18 23.3-22.2 37.4L1 480.7c-2.5 8.4-.2 17.5 6.1 23.7s15.3 8.5 23.7 6.1l120.3-35.4c14.1-4.2 27-11.8 37.4-22.2L387.7 253.7 410.3 231zM362.7 18.7L348.3 33.2 325.7 55.8 314.3 67.1l33.9 33.9 62.1 62.1 33.9 33.9 11.3-11.3 22.6-22.6 14.5-14.5c25-25 25-65.5 0-90.5L453.3 18.7c-25-25-65.5-25-90.5 0z" fill="#4b5563" /></svg>
<svg class="a" style="left:1843.50px;top:831.40px;" width="8.50" height="9.00" viewBox="0 0 8.5 9" preserveAspectRatio="none"><path d="M1 1 7.5 8M7.5 1 1 8" stroke="#4b5563" stroke-width="1.8" stroke-linecap="round"/></svg>
<div class="a" style="left:1358.00px;top:859.00px;width:519.00px;height:1.00px;background:#eceef1;"></div>
<div class="a" style="left:1357.00px;top:896.00px;width:521.00px;height:30.00px;background:#fff;border:1px solid #e6e7ea;border-radius:7px;box-shadow:0 2px 4px rgba(0,0,0,.07);"></div>
</body></html>
